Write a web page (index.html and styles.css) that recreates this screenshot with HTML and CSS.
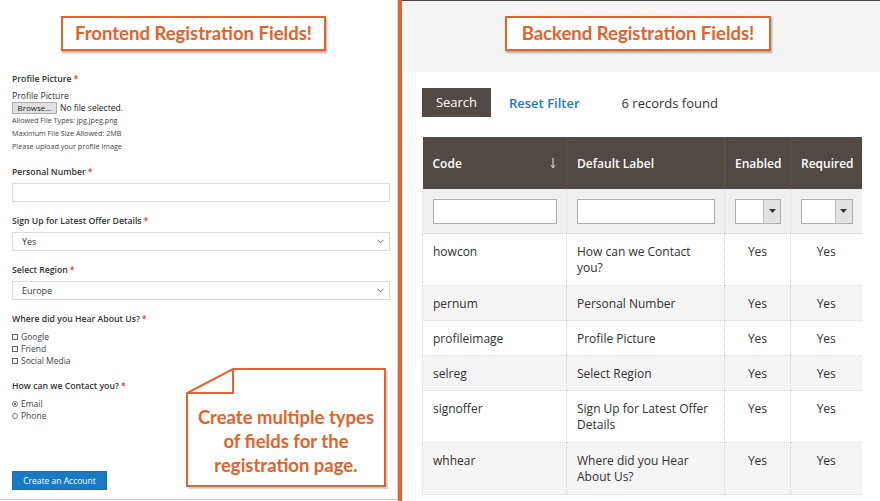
FILE: index.html
```html
<!DOCTYPE html>
<html lang="en">
<head>
<meta charset="utf-8">
<title>Registration Fields</title>
<link rel="stylesheet" href="styles.css">
</head>
<body>
<div class="page">
  <section class="front">
    <div class="title-box front-title">Frontend Registration Fields!</div>
    <form class="form">
      <div class="field">
        <div class="label">Profile Picture <span class="req">*</span></div>
        <div class="sub-label">Profile Picture</div>
        <div class="file-row"><span class="browse">Browse...</span><span class="nofile">No file selected.</span></div>
        <div class="note">Allowed File Types: jpg,jpeg,png</div>
        <div class="note">Maximum File Size Allowed: 2MB</div>
        <div class="note">Please upload your profile image</div>
      </div>
      <div class="field">
        <div class="label">Personal Number <span class="req">*</span></div>
        <div class="input"></div>
      </div>
      <div class="field">
        <div class="label">Sign Up for Latest Offer Details <span class="req">*</span></div>
        <div class="select"><span>Yes</span><svg class="chev" width="7" height="5" viewBox="0 0 7 5"><path d="M0.5 0.8 L3.5 3.8 L6.5 0.8" fill="none" stroke="#555" stroke-width="0.9"/></svg></div>
      </div>
      <div class="field">
        <div class="label">Select Region <span class="req">*</span></div>
        <div class="select"><span>Europe</span><svg class="chev" width="7" height="5" viewBox="0 0 7 5"><path d="M0.5 0.8 L3.5 3.8 L6.5 0.8" fill="none" stroke="#555" stroke-width="0.9"/></svg></div>
      </div>
      <div class="field">
        <div class="label">Where did you Hear About Us? <span class="req">*</span></div>
        <div class="opts">
          <div class="opt"><span class="box"></span>Google</div>
          <div class="opt"><span class="box"></span>Friend</div>
          <div class="opt"><span class="box"></span>Social Media</div>
        </div>
      </div>
      <div class="field">
        <div class="label">How can we Contact you? <span class="req">*</span></div>
        <div class="opts">
          <div class="opt"><span class="radio checked"></span>Email</div>
          <div class="opt"><span class="radio"></span>Phone</div>
        </div>
      </div>
      <div class="actions"><span class="btn-create">Create an Account</span></div>
    </form>

    <div class="callout">
      <svg class="callout-shape" width="204" height="124" viewBox="0 0 204 124">
        <polygon points="49,4 202,4 202,122 3,122 3,28" fill="#bdbdbd" opacity="0.6"/>
        <polygon points="47,2 199,2 199,119 1,119 1,26" fill="#fff" stroke="#e5622a" stroke-width="2"/>
        <polyline points="47,2 47,26 1,26" fill="none" stroke="#e5622a" stroke-width="2"/>
      </svg>
      <div class="callout-text">Create multiple types<br>of fields for the<br>registration page.</div>
    </div>
  </section>

  <div class="divider"></div>

  <section class="back">
    <header class="back-head">
      <div class="title-box back-title">Backend Registration Fields!</div>
    </header>
    <div class="back-body">
      <div class="toolbar">
        <span class="btn-search">Search</span>
        <span class="reset">Reset Filter</span>
        <span class="count">6 records found</span>
      </div>
      <table class="grid">
        <colgroup>
          <col class="c-code"><col class="c-label"><col class="c-en"><col class="c-req">
        </colgroup>
        <thead>
          <tr class="head">
            <th>Code<svg class="sort" width="6" height="11" viewBox="0 0 6 11"><path d="M3 0 V9" stroke="#cfcfcf" stroke-width="1.2"/><path d="M1 7 L3 10 L5 7" fill="none" stroke="#cfcfcf" stroke-width="1"/></svg></th>
            <th>Default Label</th>
            <th>Enabled</th>
            <th>Required</th>
          </tr>
          <tr class="filters">
            <td><div class="finput"></div></td>
            <td><div class="finput"></div></td>
            <td><div class="fselect"><span class="fval"></span><span class="farrow"><svg width="7" height="4" viewBox="0 0 7 4"><path d="M0 0 H7 L3.5 4 Z" fill="#333"/></svg></span></div></td>
            <td><div class="fselect"><span class="fval"></span><span class="farrow"><svg width="7" height="4" viewBox="0 0 7 4"><path d="M0 0 H7 L3.5 4 Z" fill="#333"/></svg></span></div></td>
          </tr>
        </thead>
        <tbody>
          <tr class="tall"><td>howcon</td><td>How can we Contact you?</td><td class="ctr">Yes</td><td class="ctr">Yes</td></tr>
          <tr class="alt"><td>pernum</td><td>Personal Number</td><td class="ctr">Yes</td><td class="ctr">Yes</td></tr>
          <tr><td>profileimage</td><td>Profile Picture</td><td class="ctr">Yes</td><td class="ctr">Yes</td></tr>
          <tr class="alt"><td>selreg</td><td>Select Region</td><td class="ctr">Yes</td><td class="ctr">Yes</td></tr>
          <tr class="tall"><td>signoffer</td><td>Sign Up for Latest Offer Details</td><td class="ctr">Yes</td><td class="ctr">Yes</td></tr>
          <tr class="alt tall"><td>whhear</td><td>Where did you Hear About Us?</td><td class="ctr">Yes</td><td class="ctr">Yes</td></tr>
        </tbody>
      </table>
    </div>
  </section>
</div>
</body>
</html>
```

FILE: styles.css
```css
html, body {
  margin: 0;
  padding: 0;
}
body {
  width: 880px;
  height: 501px;
  overflow: hidden;
  background: #fff;
  font-family: "Open Sans", "Noto Sans", sans-serif;
  color: #333;
}
.page {
  display: grid;
  grid-template-columns: 398px 4px 478px;
  height: 501px;
}

/* ---------- title boxes ---------- */
.title-box {
  box-sizing: border-box;
  height: 35px;
  border: 2px solid #e5622a;
  background: #fff;
  color: #e5622a;
  font-family: "Lato", "Open Sans", sans-serif;
  font-weight: 700;
  font-size: 18.5px;
  line-height: 31px;
  white-space: nowrap;
  text-align: center;
  box-shadow: 1px 2px 2px rgba(0, 0, 0, 0.3);
}
.front-title {
  width: 265px;
  margin: 16px 0 0 61px;
}
.back-title {
  width: 266px;
  margin-left: 103px;
}

/* ---------- frontend panel ---------- */
.front {
  position: relative;
  box-sizing: border-box;
  height: 500px;
  border-right: 1px solid #d4d4d4;
  border-bottom: 1px solid #cfcfcf;
}
.form {
  margin: 22px 0 0 12px;
  width: 378px;
  font-size: 8.7px;
  line-height: 12px;
}
.field + .field {
  margin-top: 13px;
}
.label {
  font-weight: 600;
  color: #333;
  margin-bottom: 5px;
}
.req {
  color: #e02b27;
  font-size: 8px;
}
.field .label + .sub-label {
  margin-top: 1px;
}
.file-row {
  display: flex;
  align-items: center;
  height: 12px;
}
.browse {
  box-sizing: border-box;
  height: 12px;
  width: 45px;
  background: #e1e1e1;
  border: 1px solid #adadad;
  font-size: 8px;
  line-height: 10px;
  text-align: center;
  color: #222;
}
.nofile {
  margin-left: 3px;
  font-size: 8.5px;
  color: #222;
}
.note {
  font-size: 7.2px;
  line-height: 13px;
  color: #444;
}
.input, .select {
  box-sizing: border-box;
  height: 19px;
  border: 1px solid #dcdcdc;
  background: #fff;
}
.select {
  display: flex;
  align-items: center;
  justify-content: space-between;
  padding: 0 5px 0 9px;
  font-size: 9px;
  color: #333;
}
.opts {
  margin-top: 6px;
}
.field .label:has(+ .opts) {
  margin-bottom: 0;
}
.opt {
  display: flex;
  align-items: center;
  height: 12px;
  font-size: 8.5px;
  color: #444;
}
.box {
  box-sizing: border-box;
  width: 6px;
  height: 6px;
  border: 1px solid #666;
  margin-right: 3px;
}
.radio {
  box-sizing: border-box;
  width: 6px;
  height: 6px;
  border: 1px solid #777;
  border-radius: 50%;
  margin-right: 3px;
  position: relative;
}
.radio.checked::after {
  content: "";
  position: absolute;
  left: 1px;
  top: 1px;
  width: 2px;
  height: 2px;
  border-radius: 50%;
  background: #333;
}
.actions {
  margin-top: 49px;
}
.btn-create {
  display: inline-block;
  box-sizing: border-box;
  width: 95px;
  height: 19px;
  background: #1979c3;
  border: 1px solid #1a6fb0;
  color: #fff;
  font-size: 8.5px;
  line-height: 17px;
  text-align: center;
}

/* callout (overlays the form) */
.callout {
  position: absolute;
  left: 186px;
  top: 367px;
  width: 204px;
  height: 124px;
}
.callout-shape {
  position: absolute;
  left: 0;
  top: 0;
}
.callout-text {
  position: relative;
  width: 200px;
  padding-top: 38px;
  text-align: center;
  font-family: "Lato", "Open Sans", sans-serif;
  font-weight: 700;
  font-size: 18.5px;
  line-height: 24px;
  color: #e5622a;
}

/* ---------- divider ---------- */
.divider {
  background: #e5622a;
}

/* ---------- backend panel ---------- */
.back {
  border-top: 1px solid #4d4642;
  background: #fff;
}
.back-head {
  box-sizing: border-box;
  height: 71px;
  padding-top: 15px;
  background: #f5f5f5;
}
.back-body {
  padding: 16px 0 0 20px;
}
.toolbar {
  display: flex;
  align-items: center;
  height: 29px;
}
.btn-search {
  box-sizing: border-box;
  width: 69px;
  height: 29px;
  background: #514943;
  color: #fff;
  font-size: 13px;
  line-height: 29px;
  text-align: center;
}
.reset {
  margin-left: 18px;
  color: #1979c3;
  font-size: 13px;
  font-weight: 600;
}
.count {
  margin-left: 42px;
  color: #333;
  font-size: 13px;
}
.grid {
  margin-top: 20px;
  width: 439px;
  border-collapse: collapse;
  table-layout: fixed;
  font-size: 12px;
  color: #303030;
}
.c-code { width: 144px; }
.c-label { width: 158px; }
.c-en { width: 66px; }
.c-req { width: 71px; }
.head th {
  height: 52px;
  padding: 0 10px;
  background: #514943;
  color: #fff;
  font-weight: 600;
  font-size: 12px;
  text-align: left;
  border-left: 1px dotted #6b625c;
}
.head th:first-child {
  border-left: none;
}
.sort {
  float: right;
  margin-top: 3px;
}
.filters td {
  height: 44px;
  padding: 0 9px 0 10px;
  background: #f0f0f0;
  border-left: 1px dotted #d8d8d8;
  border-bottom: 1px dotted #d0d0d0;
}
.finput {
  box-sizing: border-box;
  height: 25px;
  background: #fff;
  border: 1px solid #adadad;
}
.fselect {
  box-sizing: border-box;
  display: flex;
  height: 25px;
  background: #fff;
  border: 1px solid #adadad;
}
.fval {
  flex: 1;
}
.farrow {
  width: 16px;
  display: flex;
  align-items: center;
  justify-content: center;
  background: #e2e2e2;
  border-left: 1px solid #c4c4c4;
}
tbody td {
  padding: 10px 10px 8px 10px;
  line-height: 16px;
  vertical-align: top;
  border-left: 1px dotted #d6d6d6;
  border-bottom: 1px dotted #dadada;
}
tbody tr.tall td {
  padding-bottom: 9px;
}
tbody tr.alt td {
  background: #f5f5f5;
}
tbody td.ctr {
  text-align: center;
}
```
